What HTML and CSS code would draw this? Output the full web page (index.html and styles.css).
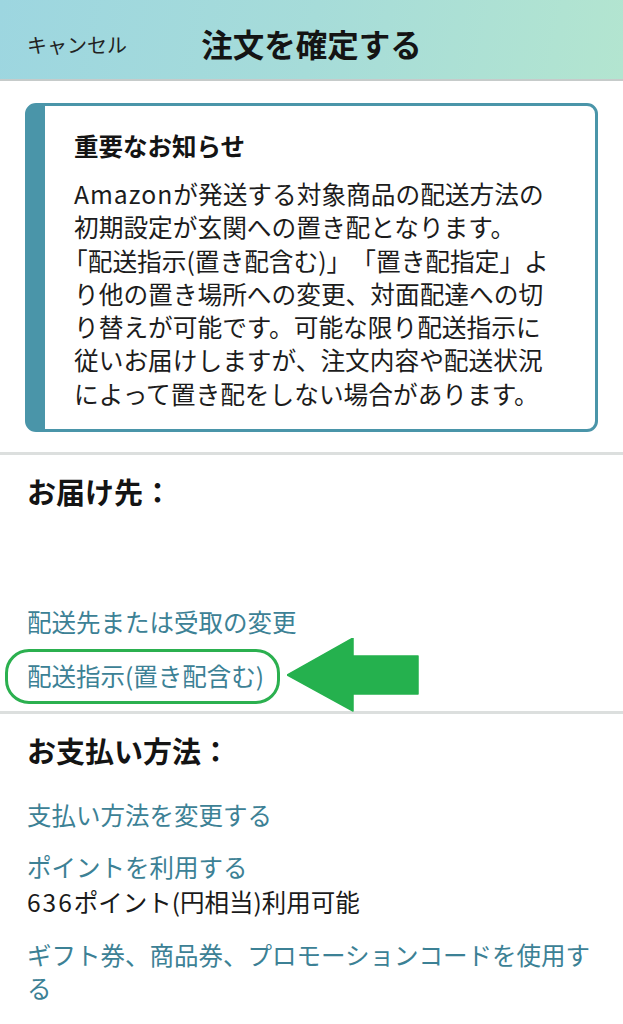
FILE: index.html
```html
<!DOCTYPE html>
<html lang="ja">
<head>
<meta charset="utf-8">
<title>注文を確定する</title>
<link rel="stylesheet" href="styles.css">
</head>
<body>
<header class="topbar">
  <span class="cancel">キャンセル</span>
  <h1 class="title">注文を確定する</h1>
  <span class="spacer"></span>
</header>

<section class="notice-wrap">
  <div class="notice">
    <h2 class="notice-title">重要なお知らせ</h2>
    <p class="notice-text"><span class="latin">Amazon</span>が発送する対象商品の配送方法の<br>初期設定が玄関への置き配となります。<br><span class="bracket">「</span>配送指示(置き配含む)」「置き配指定」よ<br>り他の置き場所への変更、対面配達への切<br>り替えが可能です。可能な限り配送指示に<br>従いお届けしますが、注文内容や配送状況<br>によって置き配をしない場合があります。</p>
  </div>
</section>

<section class="block delivery">
  <h2 class="block-title">お届け先：</h2>
  <div class="address"></div>
  <a class="link first-link" href="#">配送先または受取の変更</a>
  <div class="highlight-row">
    <a class="link highlighted" href="#">配送指示(置き配含む)</a>
    <svg class="arrow" width="132" height="74" viewBox="0 0 132 74" aria-hidden="true">
      <polygon points="0,37 66,0 66,18 131,18 131,56 66,56 66,73" fill="#25b14e" stroke="#25b14e" stroke-width="1.5" stroke-linejoin="round"/>
    </svg>
  </div>
</section>

<section class="block payment">
  <h2 class="block-title pay-title">お支払い方法：</h2>
  <a class="link item" href="#">支払い方法を変更する</a>
  <div class="item points">
    <a class="link" href="#">ポイントを利用する</a>
    <div class="plain"><span class="digits">636</span>ポイント(円相当)利用可能</div>
  </div>
  <a class="link item gift" href="#">ギフト券、商品券、プロモーションコードを使用する</a>
</section>
</body>
</html>
```
FILE: styles.css
```css
* { box-sizing: border-box; }

html, body {
  margin: 0;
  padding: 0;
  background: #ffffff;
}

body {
  font-family: "Noto Sans CJK JP", "Noto Sans", sans-serif;
  color: #161616;
  width: 623px;
  overflow: hidden;
}

.topbar {
  height: 81px;
  padding-top: 6px;
  display: grid;
  grid-template-columns: 1fr auto 1fr;
  align-items: center;
  background: linear-gradient(100deg, #9dd6e0 0%, #a6dcd9 50%, #b3e5d0 100%);
  border-bottom: 2px solid #c6cbca;
}

.cancel {
  padding-left: 27px;
  padding-top: 4px;
  font-size: 20px;
  line-height: 28px;
  color: #222;
}

.title {
  margin: 0;
  font-size: 31.5px;
  line-height: 40px;
  font-weight: 700;
  color: #141414;
}

.notice-wrap {
  padding: 22px 25px 20px;
}

.notice {
  border: 3px solid #4a95a9;
  border-left-width: 20px;
  border-radius: 11px;
  padding: 23px 10px 19px 29px;
}

.notice-title {
  margin: 0 0 15px;
  font-size: 24.5px;
  line-height: 33px;
  font-weight: 700;
  color: #141414;
}

.notice-text {
  margin: 0;
  font-size: 24.7px;
  line-height: 33.3px;
  white-space: nowrap;
  color: #1c1c1c;
  text-spacing-trim: space-all;
}

.latin {
  letter-spacing: 1px;
}

.bracket {
  margin-left: -11px;
}

.block {
  border-top: 3px solid #dcdfde;
  padding: 20px 25px 19px 27px;
}

.block-title {
  margin: 0;
  font-size: 29px;
  line-height: 33px;
  font-weight: 700;
  color: #141414;
}

.address {
  height: 97px;
}

.link {
  display: block;
  font-size: 24.5px;
  line-height: 33px;
  color: #3c8195;
  text-decoration: none;
}

.highlight-row {
  position: relative;
  margin-top: 21px;
}

.highlighted {
  display: inline-block;
  position: relative;
}

.highlighted::before {
  content: "";
  position: absolute;
  top: -10px;
  bottom: -12px;
  left: -22px;
  right: -16px;
  border: 3px solid #2bb04f;
  border-radius: 24px;
}

.arrow {
  position: absolute;
  left: 260px;
  top: -21px;
}

.payment {
  padding-top: 20px;
}

.pay-title {
  margin-bottom: 31px;
}

.item {
  margin-top: 18px;
}

.pay-title + .item {
  margin-top: 0;
}

.points .link {
  line-height: 35px;
}

.plain {
  font-size: 24.5px;
  line-height: 35px;
  color: #1a1a1a;
}

.digits {
  letter-spacing: 2px;
}

.gift {
  margin-top: 19px;
}
```
